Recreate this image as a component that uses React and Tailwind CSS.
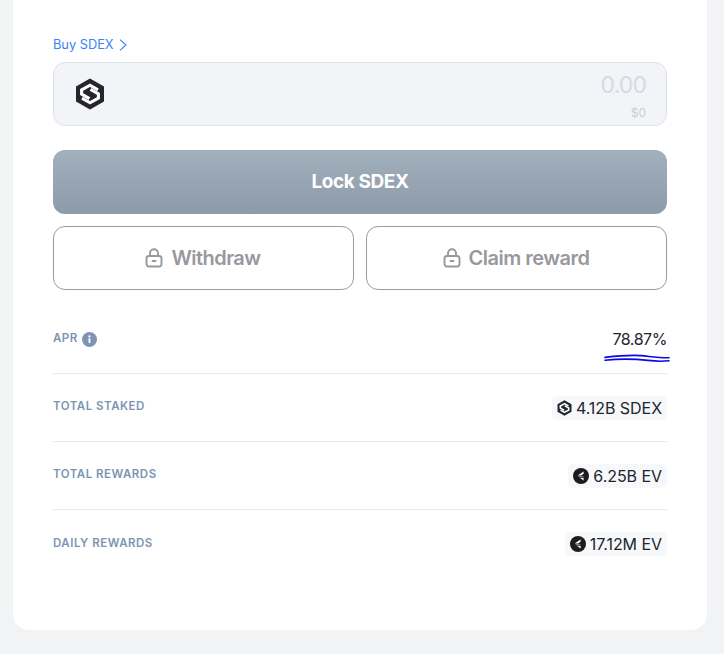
import React from "react";

function SdexLogo({ className }) {
  return (
    <svg viewBox="0 0 30 32" className={className} fill="none">
      <path d="M15 0.5 L29 8.5 V23.5 L15 31.5 L1 23.5 V8.5 Z" fill="#25252f" />
      <path d="M23 11.8 L15 7.2 L6.6 12 V16 L14.5 20.6" stroke="#fff" strokeWidth="3.1" />
      <path d="M7 20.2 L15 24.8 L23.4 20 V16 L15.5 11.4" stroke="#fff" strokeWidth="3.1" />
    </svg>
  );
}

function EvLogo() {
  return (
    <svg viewBox="0 0 16 16" className="w-[16px] h-[16px] shrink-0">
      <circle cx="8" cy="8" r="8" fill="#1c1c1e" />
      <path d="M10.6 3.4 L4.6 7.4 L8.2 7.4 L10.6 5.8 Z" fill="#fff" />
      <path d="M5.2 8.4 L10.4 8.4 L10.4 9.2 L6.4 9.2 Z" fill="#e5e5e5" />
      <path d="M7.2 10 L10.6 10 L10.6 12.6 Z" fill="#fff" />
    </svg>
  );
}

function LockIcon() {
  return (
    <svg viewBox="0 0 18 20" className="w-[18px] h-[20px] shrink-0 -mt-[1px] -ml-[1px]" fill="none" stroke="currentColor" strokeWidth="1.9">
      <rect x="1.5" y="8" width="15" height="10.5" rx="2.5" />
      <path d="M5 8 V5.2 A4 4 0 0 1 13 5.2 V8" />
      <path d="M7.5 13 H10.5" strokeLinecap="round" />
    </svg>
  );
}

function Row({ label, children, border = true, className = "" }) {
  return (
    <div className={`flex justify-between items-center border-[#e8eaed] ${border ? "border-b" : ""} ${className}`}>
      {label}
      {children}
    </div>
  );
}

function Label({ children }) {
  return <span className="block -mt-[3px] text-[11.5px] leading-[14px] font-semibold tracking-[0.5px] text-[#7d94b3]">{children}</span>;
}

function Pill({ icon, children }) {
  return (
    <div className="flex items-center gap-[4px] h-[24px] pl-[5px] pr-[5px] rounded-[5px] bg-[#f6f8fa] text-[16px] text-[#1e2430] tracking-[-0.05px]">
      {icon}
      <span>{children}</span>
    </div>
  );
}

export default function App() {
  return (
    <div className="w-[724px] h-[654px] bg-[#f2f3f5] overflow-hidden font-['Inter',sans-serif]">
      <div className="ml-[13px] w-[694px] h-[630px] bg-white rounded-b-[16px] px-[40px] pt-[36px]">
        <div className="flex items-center h-[18px] gap-[5px] text-[12.8px] text-[#3b82f6]">
          <span>Buy SDEX</span>
          <svg viewBox="0 0 8 12" className="w-[8px] h-[12px]" fill="none" stroke="currentColor" strokeWidth="1.1">
            <path d="M1 0.6 L7 6 L1 11.4" />
          </svg>
        </div>
        <div className="mt-[8px] h-[64px] rounded-[12px] border border-[#dde3ea] bg-[#f2f4f8] flex items-center justify-between pl-[21px] pr-[20px]">
          <SdexLogo className="w-[30px] h-[32px]" />
          <div className="flex flex-col items-end">
            <span className="text-[23px] leading-[26px] text-[#d5dbe5] tracking-[-0.9px] mt-[3px]">0.00</span>
            <span className="text-[12px] leading-[14px] text-[#c6d0db] mt-[8px]">$0</span>
          </div>
        </div>
        <div className="mt-[24px] h-[64px] rounded-[12px] bg-linear-to-b from-[#a2afbc] to-[#8d9aa8] flex items-center justify-center text-white text-[19px] leading-[24px] font-bold tracking-[-0.4px]">
          Lock SDEX
        </div>
        <div className="mt-[12px] grid grid-cols-2 gap-[12px]">
          <div className="h-[64px] rounded-[12px] border border-[#9a9aa0] flex items-center justify-center gap-[8px] text-[#98989e] text-[20px] font-semibold tracking-[-0.55px]">
            <LockIcon />
            Withdraw
          </div>
          <div className="h-[64px] rounded-[12px] border border-[#9a9aa0] flex items-center justify-center gap-[8px] text-[#98989e] text-[20px] font-semibold tracking-[-0.5px]">
            <LockIcon />
            Claim reward
          </div>
        </div>
        <Row
          className="relative mt-[16px] h-[68px]"
          label={
            <span className="flex items-center gap-[4px] -mt-[1px]">
              <span className="text-[11.5px] leading-[14px] font-semibold tracking-[0.5px] text-[#7d94b3] -mt-[3px]">APR</span>
              <span className="w-[15px] h-[15px] rounded-full bg-[#7d94b3] flex items-center justify-center">
                <svg viewBox="0 0 15 15" className="w-[15px] h-[15px]">
                  <circle cx="7.5" cy="4.4" r="1.1" fill="#fff" />
                  <path d="M6.2 6.6 H8.4 V11 H6.6 V7.6 H6.2 Z" fill="#fff" />
                </svg>
              </span>
            </span>
          }
        >
          <span className="text-[16px] text-[#1e2430] tracking-[-0.45px] -mt-[1px]">78.87%</span>
          <svg viewBox="0 0 66 10" className="absolute right-[-3px] top-[48px] w-[66px] h-[10px]" fill="none" stroke="#0808e8" strokeWidth="1.6" strokeLinecap="round">
            <path d="M1 3.4 C13 2 26 1 37 1.6 C46 2.4 54 4 65 3.8" />
            <path d="M1 6.2 C16 4.6 32 5 44 6.4 C52 7.4 59 7.4 65 6.8" />
          </svg>
        </Row>
        <Row className="h-[68px]" label={<Label>TOTAL STAKED</Label>}>
          <Pill icon={<SdexLogo className="w-[15px] h-[16px] shrink-0" />}>4.12B SDEX</Pill>
        </Row>
        <Row className="h-[68px]" label={<Label>TOTAL REWARDS</Label>}>
          <Pill icon={<EvLogo />}>6.25B EV</Pill>
        </Row>
        <Row className="h-[68px]" border={false} label={<Label>DAILY REWARDS</Label>}>
          <Pill icon={<EvLogo />}>17.12M EV</Pill>
        </Row>
      </div>
    </div>
  );
}
